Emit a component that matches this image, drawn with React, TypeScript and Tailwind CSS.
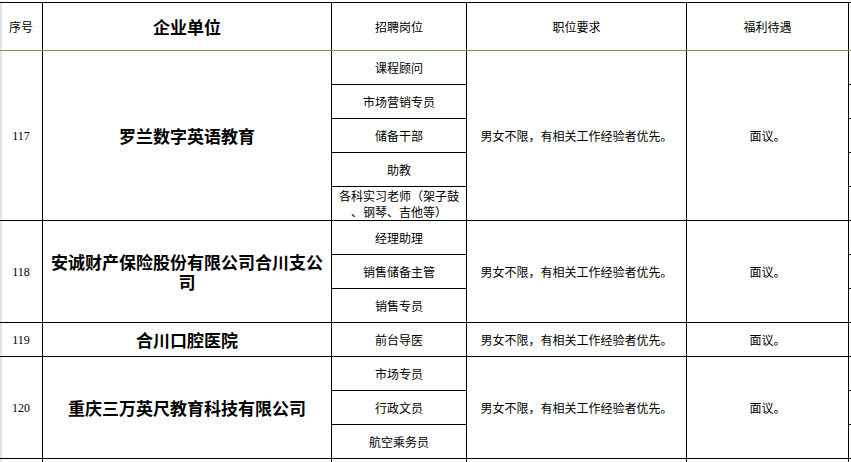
import React from "react";

type Group = {
  no: string;
  company: string;
  jobs: string[];
};

const GROUPS: Group[] = [
  {
    no: "117",
    company: "罗兰数字英语教育",
    jobs: ["课程顾问", "市场营销专员", "储备干部", "助教", "各科实习老师（架子鼓\n、钢琴、吉他等）"],
  },
  {
    no: "118",
    company: "安诚财产保险股份有限公司合川支公司",
    jobs: ["经理助理", "销售储备主管", "销售专员"],
  },
  { no: "119", company: "合川口腔医院", jobs: ["前台导医"] },
  {
    no: "120",
    company: "重庆三万英尺教育科技有限公司",
    jobs: ["市场专员", "行政文员", "航空乘务员"],
  },
  // partial row peeking in at the bottom
  { no: "", company: "", jobs: [""] },
];

const REQ = "男女不限，有相关工作经验者优先。";
const PAY = "面议。";

function Cell({ className = "", children }: { className?: string; children?: React.ReactNode }) {
  return (
    <div className={`flex items-center justify-center border-r border-b border-black text-center ${className}`}>
      {children}
    </div>
  );
}

export default function App() {
  return (
    <div className="w-[851px] h-[462px] overflow-hidden bg-white text-black font-['Noto_Sans_CJK_SC','Noto_Sans',sans-serif]">
      {/* top border */}
      <div className="h-[3px] border-b border-black" />

      {/* Header */}
      <div className="flex h-[48px] border-b border-[#6f9c52] text-[12px]">
        <div className="w-[43px] flex items-center justify-center border-r border-black shadow-[inset_2px_0_0_#e3e3e3]">
          序号
        </div>
        <div className="w-[289px] flex items-center justify-center border-r border-black text-[17px] font-bold">
          企业单位
        </div>
        <div className="w-[135px] flex items-center justify-center border-r border-black">招聘岗位</div>
        <div className="w-[220px] flex items-center justify-center border-r border-black">职位要求</div>
        <div className="w-[162px] flex items-center justify-center border-r border-black">福利待遇</div>
        <div className="flex-1" />
      </div>

      {/* Body */}
      {GROUPS.map((g, i) => (
        <div key={i} className="flex">
          <Cell className="w-[43px] shadow-[inset_2px_0_0_#e3e3e3] font-['Liberation_Serif',serif] text-[12px]">
            {g.no}
          </Cell>
          <Cell className="w-[289px] px-[6px] text-[17px] font-bold leading-5">{g.company}</Cell>
          <div className="w-[135px] flex flex-col">
            {g.jobs.map((job, j) => (
              <Cell key={j} className="h-[34px] flex-col text-[12px] leading-4">
                {job.split("\n").map((line, k) => (
                  <span key={k} className="block whitespace-nowrap">
                    {line}
                  </span>
                ))}
              </Cell>
            ))}
          </div>
          <Cell className="w-[220px] text-[12px]">{g.no && REQ}</Cell>
          <Cell className="w-[162px] text-[12px]">{g.no && PAY}</Cell>
          <div className="flex-1 flex flex-col">
            {g.jobs.map((_, j) => (
              <div key={j} className="h-[34px] border-b border-black" />
            ))}
          </div>
        </div>
      ))}
    </div>
  );
}
